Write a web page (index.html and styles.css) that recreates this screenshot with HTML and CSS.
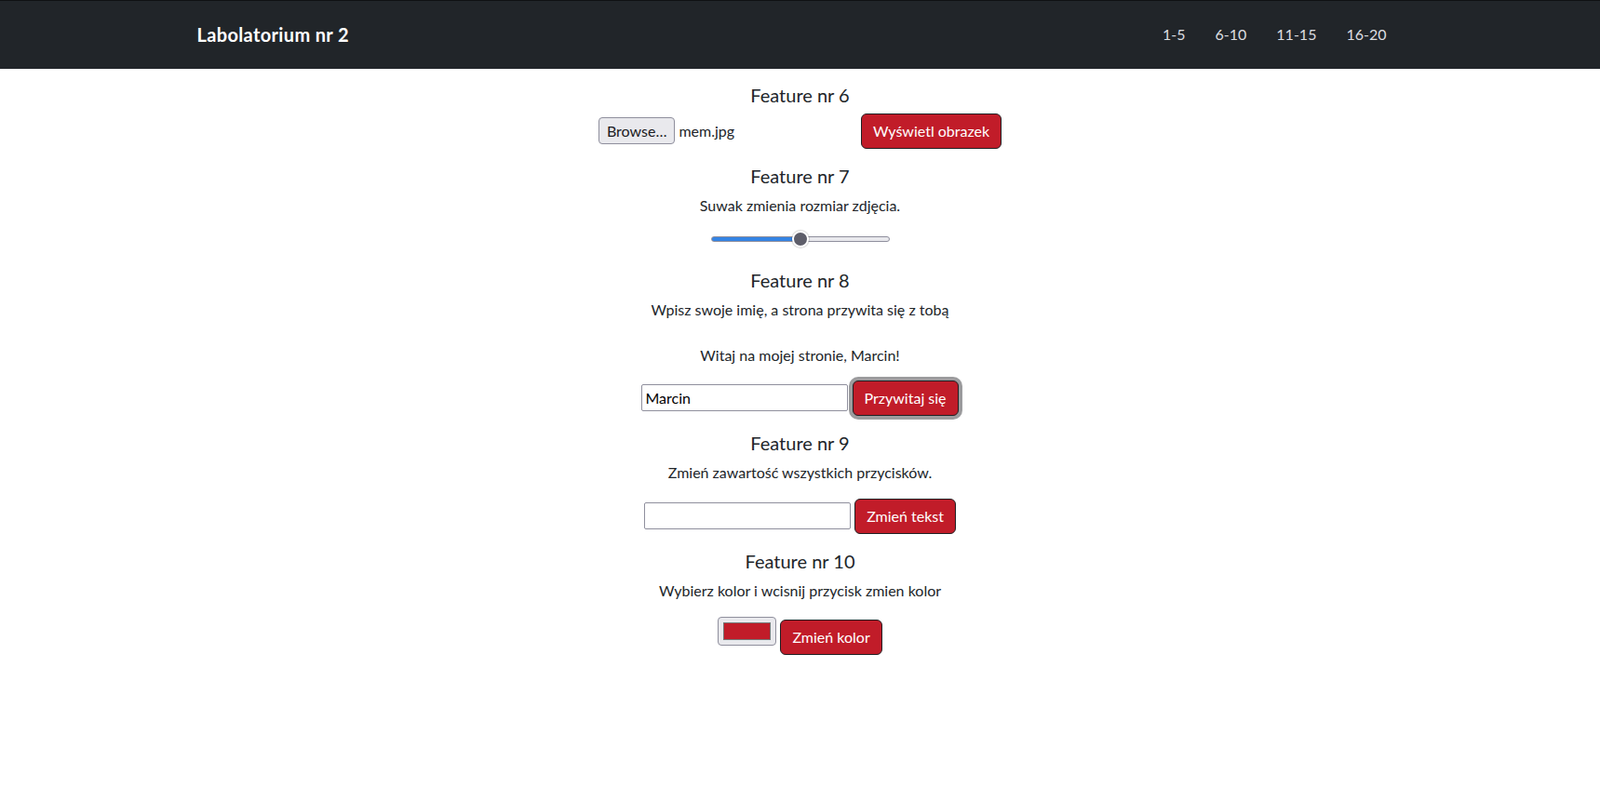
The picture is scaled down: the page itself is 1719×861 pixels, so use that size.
FILE: index.html
```html
<!DOCTYPE html>
<html lang="pl">
<head>
<meta charset="utf-8">
<title>Labolatorium nr 2</title>
<link rel="stylesheet" href="styles.css">
</head>
<body>
<nav class="navbar">
  <div class="container nav-inner">
    <a class="brand" href="#">Labolatorium nr 2</a>
    <ul class="nav-links">
      <li><a href="#">1-5</a></li>
      <li><a href="#">6-10</a></li>
      <li><a href="#">11-15</a></li>
      <li><a href="#">16-20</a></li>
    </ul>
  </div>
</nav>
<main class="content">
  <section class="feature">
    <h5 class="title">Feature nr 6</h5>
    <div class="row">
      <span class="file"><span class="file-btn">Browse…</span><span class="file-name">mem.jpg</span></span>
      <button class="btn">Wyświetl obrazek</button>
    </div>
  </section>
  <section class="feature">
    <h5 class="title">Feature nr 7</h5>
    <p class="text">Suwak zmienia rozmiar zdjęcia.</p>
    <div class="row slider-row">
      <input class="range" type="range" min="0" max="100" value="50">
    </div>
  </section>
  <section class="feature">
    <h5 class="title">Feature nr 8</h5>
    <p class="text">Wpisz swoje imię, a strona przywita się z tobą</p>
    <p class="text greeting">Witaj na mojej stronie, Marcin!</p>
    <div class="row">
      <input class="field" type="text" value="Marcin">
      <button class="btn focused">Przywitaj się</button>
    </div>
  </section>
  <section class="feature">
    <h5 class="title">Feature nr 9</h5>
    <p class="text">Zmień zawartość wszystkich przycisków.</p>
    <div class="row">
      <input class="field" type="text" value="">
      <button class="btn">Zmień tekst</button>
    </div>
  </section>
  <section class="feature">
    <h5 class="title">Feature nr 10</h5>
    <p class="text">Wybierz kolor i wcisnij przycisk zmien kolor</p>
    <div class="row">
      <span class="color"><span class="swatch"></span></span>
      <button class="btn">Zmień kolor</button>
    </div>
  </section>
</main>
</body>
</html>
```
FILE: styles.css
```css
* { box-sizing: border-box; }
html, body { margin: 0; padding: 0; }
body {
  font-family: Lato, "Noto Sans", sans-serif;
  font-size: 16px;
  line-height: 1.5;
  color: #212529;
  background: #fff;
}
.container {
  max-width: 1320px;
  margin: 0 auto;
  padding: 0 12px;
}
.navbar {
  background: #212529;
  border-top: 1px solid #0f1113;
  padding: 21px 0 22px;
}
.nav-inner {
  display: flex;
  align-items: center;
  justify-content: space-between;
}
.brand {
  font-size: 20px;
  font-weight: 700;
  line-height: 30px;
  letter-spacing: 0.35px;
  color: #fff;
  text-decoration: none;
}
.nav-links {
  list-style: none;
  margin: 0 2px 0 0;
  padding: 0;
  display: flex;
}
.nav-links a {
  display: block;
  padding: 0 16px;
  line-height: 24px;
  color: #dddee0;
  text-decoration: none;
}
.content {
  text-align: center;
  padding-top: 16px;
}
.feature { margin: 0; }
.title {
  font-size: 20px;
  font-weight: 400;
  line-height: 1.2;
  margin: 0 0 8px;
}
.text { margin: 0 0 16px; }
.greeting { margin-top: 25px; margin-bottom: 15px; }
.row { margin-bottom: 17px; }
.btn {
  font-family: inherit;
  font-size: 16px;
  line-height: 24px;
  padding: 6px 12px;
  color: #fff;
  background: #c11c29;
  border: 1px solid #1f2023;
  border-radius: 6px;
  cursor: pointer;
}
.btn.focused { box-shadow: 0 0 0 4px #9c9c9e; }
.file {
  display: inline-block;
  width: 278px;
  text-align: left;
}
.file-btn {
  display: inline-block;
  height: 29px;
  line-height: 27px;
  padding: 0 8px;
  background: #e9e9ed;
  border: 1px solid #8f8f9d;
  border-radius: 4px;
  color: #1b1b1f;
}
.file-name { margin-left: 4px; }
.field {
  font-family: inherit;
  font-size: 16px;
  width: 222px;
  height: 29px;
  padding: 0 3px;
  border: 1px solid #8f8f9d;
  border-radius: 2px;
  color: #000;
  background: #fff;
}
.slider-row {
  height: 25px;
  margin-bottom: 16px;
}
.range {
  -webkit-appearance: none;
  appearance: none;
  display: block;
  width: 192px;
  height: 18px;
  margin: -1px auto 0;
  background: transparent;
}
.range::-webkit-slider-runnable-track {
  height: 6px;
  border-radius: 3px;
  border: 1px solid #8f8f9d;
  background: linear-gradient(to right, #3584e4 0 50%, #e9e9ed 50% 100%);
}
.range::-webkit-slider-thumb {
  -webkit-appearance: none;
  width: 18px;
  height: 18px;
  border-radius: 50%;
  background: #5e5e6a;
  border: 2px solid #fff;
  box-shadow: 0 0 1px 1px rgba(0,0,0,0.15);
  margin-top: -7px;
}
.color {
  display: inline-block;
  width: 63px;
  height: 31px;
  padding: 5px;
  vertical-align: -3px;
  background: #e9e9ed;
  border: 1px solid #8f8f9d;
  border-radius: 4px;
}
.swatch {
  display: block;
  width: 100%;
  height: 100%;
  background: #c11c29;
  border: 1px solid #767676;
}
```
